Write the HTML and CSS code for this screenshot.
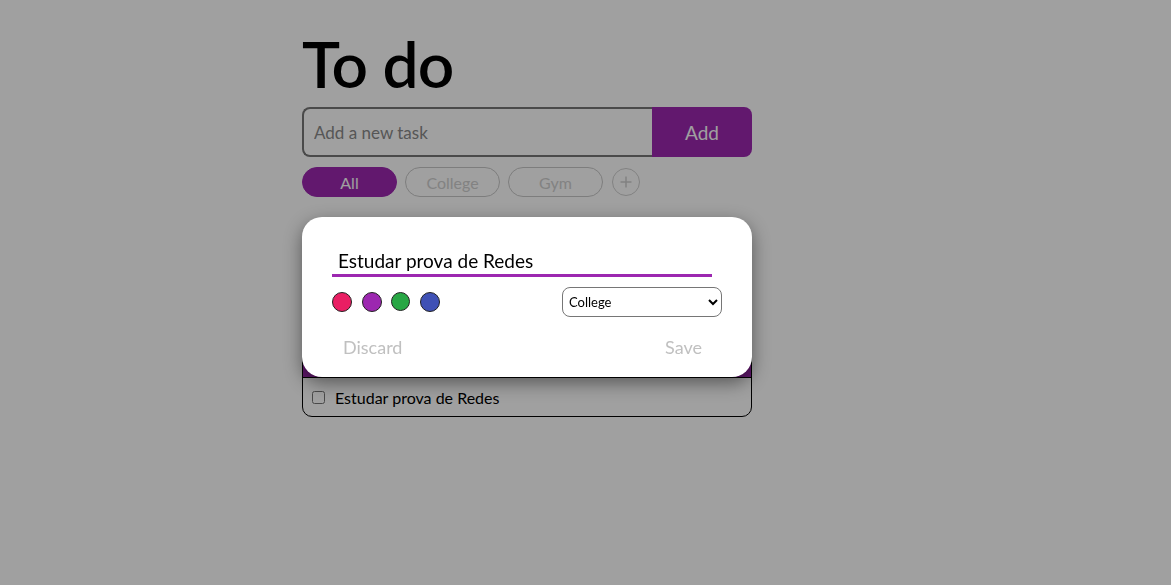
FILE: index.html
```html
<!DOCTYPE html>
<html lang="pt">
<head>
<meta charset="utf-8">
<title>To do</title>
<link rel="stylesheet" href="styles.css">
</head>
<body>
<main class="app">
  <h1 class="title">To do</h1>
  <form class="add-row">
    <input class="add-input" type="text" placeholder="Add a new task">
    <button class="add-btn" type="button">Add</button>
  </form>
  <div class="filters">
    <button class="chip chip-active" type="button">All</button>
    <button class="chip" type="button">College</button>
    <button class="chip" type="button">Gym</button>
    <button class="chip-plus" type="button">
      <svg viewBox="0 0 28 28" width="28" height="28"><circle cx="14" cy="14" r="13.5" fill="none" stroke="#cfcfcf" stroke-width="1"/><path d="M14 8.5v11M8.5 14h11" stroke="#cfcfcf" stroke-width="1.5"/></svg>
    </button>
  </div>
  <section class="board">
    <div class="list">
      <div class="list-head"></div>
      <label class="item"><input class="check" type="checkbox"><span>Estudar prova de Redes</span></label>
    </div>
  </section>
</main>
<div class="overlay"></div>
<div class="modal">
  <input class="modal-input" type="text" value="Estudar prova de Redes">
  <div class="modal-row">
    <div class="colors">
      <span class="dot dot-pink"></span>
      <span class="dot dot-purple"></span>
      <span class="dot dot-green"></span>
      <span class="dot dot-blue"></span>
    </div>
    <select class="modal-select">
      <option>College</option>
      <option>Gym</option>
    </select>
  </div>
  <div class="modal-actions">
    <button class="txt-btn" type="button">Discard</button>
    <button class="txt-btn" type="button">Save</button>
  </div>
</div>
</body>
</html>
```
FILE: styles.css
```css
* { box-sizing: border-box; }
html, body { margin: 0; padding: 0; }
body {
  background: #ffffff;
  font-family: Lato, "Noto Sans", sans-serif;
  color: #000;
  width: 1171px;
  height: 585px;
  overflow: hidden;
}
.app {
  width: 450px;
  margin-left: 302px;
  padding-top: 26px;
}
.title {
  margin: 0;
  font-size: 64px;
  font-weight: 600;
  line-height: 76px;
  letter-spacing: -0.8px;
}
.add-row {
  display: flex;
  margin: 5px 0 0;
  height: 50px;
}
.add-input {
  flex: 0 0 350px;
  height: 50px;
  border: 2px solid #767676;
  border-right: none;
  border-radius: 8px 0 0 8px;
  padding: 0 10px;
  font-family: inherit;
  font-size: 17px;
  color: #000;
  background: #fff;
  outline: none;
}
.add-input::placeholder { color: #8a8a8a; }
.add-btn {
  flex: 0 0 100px;
  border: none;
  background: #9c27b0;
  color: #fff;
  border-radius: 0 8px 8px 0;
  font-family: inherit;
  font-size: 19px;
}
.filters {
  display: flex;
  align-items: center;
  gap: 8px;
  margin-top: 10px;
  height: 30px;
}
.chip {
  width: 95px;
  height: 30px;
  border-radius: 15px;
  border: 1px solid #c8c8c8;
  background: #fff;
  color: #d0d0d0;
  font-family: inherit;
  font-size: 16px;
  padding: 0;
}
.chip-active {
  background: #9c27b0;
  border-color: #9c27b0;
  color: #fff;
}
.chip-plus {
  width: 28px;
  height: 28px;
  padding: 0;
  margin-left: 1px;
  border: none;
  background: none;
  display: flex;
}
.board {
  padding-top: 140px;
}
.list {
  border: 1px solid #000;
  border-radius: 10px;
  overflow: hidden;
}
.list-head {
  height: 40px;
  background: #9c27b0;
  border-bottom: 1px solid #000;
}
.item {
  display: flex;
  align-items: center;
  height: 38px;
  padding-left: 10px;
  font-size: 16px;
}
.check {
  width: 13px;
  height: 13px;
  margin: 0 10px 0 -1px;
}
.overlay {
  position: fixed;
  inset: 0;
  background: rgba(0, 0, 0, 0.373);
  z-index: 1;
}
.modal {
  position: absolute;
  top: 217px;
  left: 302px;
  width: 450px;
  height: 160px;
  background: #fff;
  border-radius: 20px;
  box-shadow: 0 6px 18px rgba(0, 0, 0, 0.45);
  z-index: 2;
  padding: 30px 30px 0 30px;
  display: flex;
  flex-direction: column;
}
.modal-input {
  width: 380px;
  height: 30px;
  border: none;
  border-bottom: 3px solid #9c27b0;
  padding: 0 6px;
  font-family: inherit;
  font-size: 19px;
  color: #000;
  outline: none;
  background: transparent;
}
.modal-row {
  display: flex;
  justify-content: space-between;
  align-items: center;
  margin-top: 9px;
  height: 31px;
  width: 390px;
}
.colors {
  display: flex;
  align-items: center;
  gap: 10px;
}
.dot {
  width: 20px;
  height: 20px;
  border-radius: 50%;
  border: 1px solid #222;
}
.dot-pink { background: #e91e63; }
.dot-purple { background: #9c27b0; }
.dot-green { background: #28a745; width: 19px; height: 19px; margin-left: -1px; }
.dot-blue { background: #3f51b5; }
.modal-select {
  width: 160px;
  height: 30px;
  border: 1px solid #767676;
  border-radius: 8px;
  background: #fff;
  font-family: inherit;
  font-size: 13px;
  padding: 0 2px;
}
.modal-actions {
  display: flex;
  justify-content: space-between;
  width: 390px;
  margin-top: 15px;
  padding: 0 12px 0 3px;
}
.txt-btn {
  border: none;
  background: none;
  font-family: inherit;
  font-size: 18px;
  color: #c0c0c0;
  padding: 4px 8px;
}
```
